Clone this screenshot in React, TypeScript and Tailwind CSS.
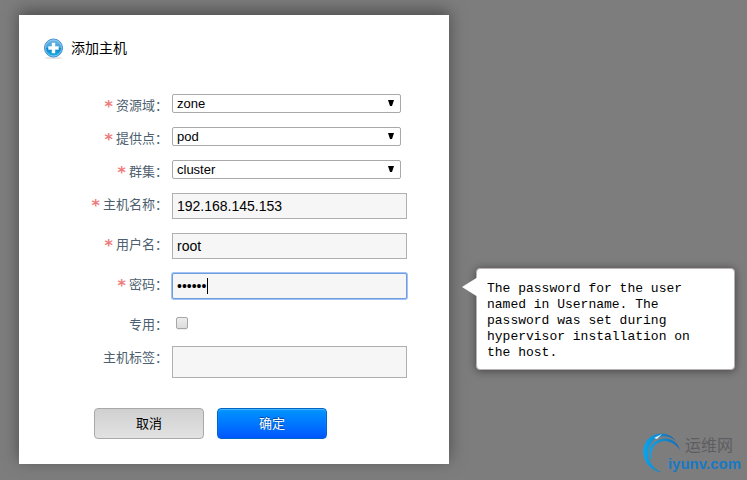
import React, { useState } from 'react';

interface FieldProps {
  id: string;
  label: string;
  required?: boolean;
  children: React.ReactNode;
}

const INPUT_STYLE = 'block h-[26px] w-full border border-[#afafaf] bg-[#f6f6f6] px-1 text-sm text-black outline-none';

const Field: React.FC<FieldProps> = ({ id, label, required, children }) => (
  <div className="flex items-start gap-1">
    <label htmlFor={id} className="-mb-2 flex h-6 w-[125px] shrink-0 justify-end gap-[3px] text-[13px] leading-6 text-[#4e5f6f]">
      {required && <span className="font-['DejaVu_Sans'] text-base leading-[26px] font-bold text-[#ee7b7b]">*</span>}
      <span>{label}：</span>
    </label>
    <div className="relative min-h-[19px] flex-1">{children}</div>
  </div>
);

const SelectBox: React.FC<{ id: string; options: string[] }> = ({ id, options }) => (
  <div className="relative mr-1.5">
    <select
      id={id}
      className="block h-[19px] w-full appearance-none rounded-xs border border-[#a9a9a9] bg-white px-1 text-[13px] leading-4 text-black outline-none"
    >
      {options.map((option) => (
        <option key={option}>{option}</option>
      ))}
    </select>
    <svg className="pointer-events-none absolute top-1.5 right-1.5" width="7" height="7" viewBox="0 0 7 7">
      <path d="M0 0h6L4 6H2z" fill="#000" />
    </svg>
  </div>
);

const AddIcon = () => (
  <svg width="20" height="22" viewBox="0 0 20 22" className="shrink-0">
    <defs>
      <linearGradient id="disc" x1="0" y1="0" x2="0" y2="1">
        <stop offset="0" stopColor="#79b9e6" />
        <stop offset="0.48" stopColor="#3ba0d8" />
        <stop offset="0.52" stopColor="#0b86c8" />
        <stop offset="1" stopColor="#21b4e6" />
      </linearGradient>
    </defs>
    <ellipse cx="10.5" cy="21" rx="9" ry="1" fill="#e4e4e4" />
    <circle cx="10.5" cy="11" r="9" fill="url(#disc)" stroke="#4a8ad0" />
    <circle cx="10.5" cy="11" r="8" fill="none" stroke="#8fd0f2" strokeWidth="0.8" />
    <path d="M9 6h3v3.5h3.5v3H12V16H9v-3.500H5.500v-3H9z" fill="#fff" stroke="#fff" strokeWidth="0.4" />
  </svg>
);

const Tooltip: React.FC<{ children: React.ReactNode }> = ({ children }) => (
  <div
    role="tooltip"
    className="absolute -top-[5px] left-[304px] w-[259px] rounded border border-[#b9b2b2] bg-white pt-3 pr-6 pb-2 pl-2.5 font-['Liberation_Mono',monospace] text-[13px] leading-4 text-black shadow-[0_1px_9px_#444]"
  >
    <svg className="absolute top-2 -left-[15px]" width="16" height="20" viewBox="0 0 16 20">
      <path d="M16 0v20L0 10z" fill="#fff" />
    </svg>
    {children}
  </div>
);

const Watermark = () => (
  <div className="absolute right-1.5 bottom-1 flex h-11 w-[98px] flex-col items-end">
    <svg className="absolute top-0 left-0" width="40" height="44" viewBox="0 0 40 44">
      <defs>
        <linearGradient id="swirl" x1="0" y1="0" x2="1" y2="0">
          <stop offset="0" stopColor="#0ba4ea" />
          <stop offset="1" stopColor="#1868ae" />
        </linearGradient>
      </defs>
      <path d="M19 40.5C-4 37-6 7 14 2C21 0 29 3 33 9C27 4 20 3 14 6C1 13 2 34 19 40.5z" fill="url(#swirl)" />
      <path d="M9 29C3 19 8 9 19 7C28 5 35 11 37 18C32 11 24 7 17 10C9 13 7 21 9 29z" fill="url(#swirl)" />
      <path d="M11 6l8-4-5 5z" fill="#d8f2ff" />
    </svg>
    <span className="mt-0.5 mr-2 text-base leading-6 text-[#5d5d61]">运维网</span>
    <span className="relative -mt-0.5 font-['Liberation_Sans'] text-[15px] leading-4 font-bold text-[#1779c4]">iyunv.com</span>
  </div>
);

const App: React.FC = () => {
  const [hostname, setHostname] = useState('192.168.145.153');
  const [username, setUsername] = useState('root');
  const [password, setPassword] = useState('secret');

  return (
    <div className="relative min-h-screen overflow-hidden bg-[#7d7d7d] px-[19px] pt-[15px] pb-4 font-['Liberation_Sans','Noto_Sans_CJK_SC',sans-serif]">
      <form
        onSubmit={(e) => e.preventDefault()}
        className="w-full max-w-[430px] bg-white px-6 pt-[22px] pb-[25px] shadow-[0_-4px_15px_#4b4b4b]"
      >
        <h1 className="flex items-center gap-2 text-sm leading-5 text-black">
          <AddIcon />
          添加主机
        </h1>

        <div className="mt-[35px] mr-[18px] flex flex-col gap-3.5">
          <Field id="zone" label="资源域" required>
            <SelectBox id="zone" options={['zone']} />
          </Field>
          <Field id="pod" label="提供点" required>
            <SelectBox id="pod" options={['pod']} />
          </Field>
          <Field id="cluster" label="群集" required>
            <SelectBox id="cluster" options={['cluster']} />
          </Field>
          <Field id="hostname" label="主机名称" required>
            <input id="hostname" className={INPUT_STYLE} value={hostname} onChange={(e) => setHostname(e.target.value)} />
          </Field>
          <Field id="username" label="用户名" required>
            <input id="username" className={INPUT_STYLE} value={username} onChange={(e) => setUsername(e.target.value)} />
          </Field>
          <Field id="password" label="密码" required>
            <input
              id="password"
              type="password"
              autoFocus
              className="block h-[26px] w-full rounded-xs border border-[#6f9be0] bg-[#f6f6f6] px-1 text-sm text-black caret-transparent ring-1 ring-[#a3c3f5] outline-none"
              value={password}
              onChange={(e) => setPassword(e.target.value)}
            />
            <span className="pointer-events-none absolute top-[5px] left-[35px] h-4 w-px bg-black" />
            <Tooltip>
              The password for the user named in Username. The password was set during hypervisor installation on the host.
            </Tooltip>
          </Field>
          <Field id="dedicated" label="专用">
            <input
              id="dedicated"
              type="checkbox"
              className="mt-1 ml-1 block size-3 appearance-none rounded-xs border border-[#a6a6a6] bg-linear-to-b from-[#ededed] to-[#dcdcdc] shadow-[0_1px_0_#eee] checked:bg-blue-500"
            />
          </Field>
          <Field id="tags" label="主机标签">
            <textarea
              id="tags"
              className="block h-8 w-full resize-none border border-[#afafaf] bg-[#f6f6f6] p-1 text-sm text-black outline-none"
            />
          </Field>
        </div>

        <div className="mt-[30px] ml-[51px] flex gap-[13px] text-[13px]">
          <button
            type="button"
            className="h-[31px] w-[110px] rounded border border-[#a8a8a8] bg-linear-to-b from-[#d0d0d0] to-[#e2e2e2] text-black"
          >
            取消
          </button>
          <button
            type="submit"
            className="h-[31px] w-[110px] rounded border border-[#0065c5] bg-linear-to-b from-[#0095ff] to-[#0055ff] text-white shadow-[inset_0_1px_1px_#4bb2ff] text-shadow-[0_-1px_1px_#00428f]"
          >
            确定
          </button>
        </div>
      </form>
      <Watermark />
    </div>
  );
};

export default App;
